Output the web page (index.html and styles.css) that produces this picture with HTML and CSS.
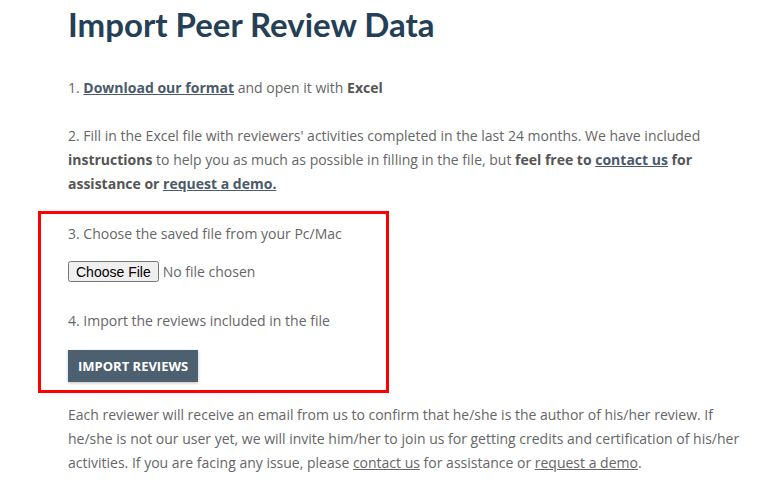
FILE: index.html
```html
<!DOCTYPE html>
<html lang="en">
<head>
    <meta charset="UTF-8">
    <title>Import Peer Review Data</title>
    <link rel="stylesheet" href="styles.css">
</head>
<body>
    <div class="page">
        <h1>Import Peer Review Data</h1>
        <p>1. <a href="#" class="strong-link">Download our format</a> and open it with <b>Excel</b></p>
        <p class="before-box">2. Fill in the Excel file with reviewers' activities completed in the last 24 months. We have included
            <b>instructions</b> to help you as much as possible in filling in the file, but <b>feel free to
            <a href="#" class="strong-link">contact us</a> for assistance or <a href="#" class="strong-link">request a demo.</a></b></p>
        <div class="upload-box">
            <p>3. Choose the saved file from your Pc/Mac</p>
            <input type="file" id="file-input">
            <p class="step-four">4. Import the reviews included in the file</p>
            <button type="button" class="import-btn">Import reviews</button>
        </div>
        <p>Each reviewer will receive an email from us to confirm that he/she is the author of his/her review. If
            he/she is not our user yet, we will invite him/her to join us for getting credits and certification of his/her
            activities. If you are facing any issue, please <a href="#">contact us</a> for assistance or <a href="#">request a demo</a>.</p>
    </div>
</body>
</html>
```

FILE: styles.css
```css
body {
    margin: 0;
    background: #fff;
    color: #666;
    font-family: "Open Sans", sans-serif;
    font-size: 14px;
    line-height: 24px;
}
.page {
    padding: 0 20px 0 68px;
    max-width: 682px;
}
h1 {
    font-family: Lato, sans-serif;
    font-size: 33px;
    font-weight: 700;
    color: #243f56;
    line-height: 40px;
    margin: 4px 0 32px;
}
p {
    margin: 0 0 24px;
}
p.before-box {
    margin-bottom: 15px;
}
b {
    color: #555;
}
a {
    color: #666;
    text-decoration: underline;
}
a.strong-link {
    color: #4a5a6a;
    font-weight: 700;
}
.upload-box {
    margin-left: -30px;
    width: 351px;
    box-sizing: border-box;
    border: 3px solid #f00;
    padding: 8px 27px 8px;
    margin-bottom: 10px;
}
.upload-box p {
    margin-bottom: 15px;
}
.upload-box p.step-four {
    margin-bottom: 17px;
}
#file-input {
    display: block;
    font-family: "Open Sans", sans-serif;
    font-size: 14px;
    color: #666;
    margin-bottom: 27px;
}
#file-input::file-selector-button {
    font-family: "Liberation Sans", Arial, sans-serif;
    font-size: 14px;
    color: #000;
    height: 21px;
    padding: 0 6px;
    margin-right: 4px;
}
.import-btn {
    display: block;
    background: #4d6070;
    color: #fff;
    border: none;
    font-family: "Open Sans", sans-serif;
    font-weight: 700;
    font-size: 13px;
    text-transform: uppercase;
    padding: 0 10px;
    height: 32px;
    box-shadow: 0 1px 3px rgba(0, 0, 0, 0.25);
}
```
